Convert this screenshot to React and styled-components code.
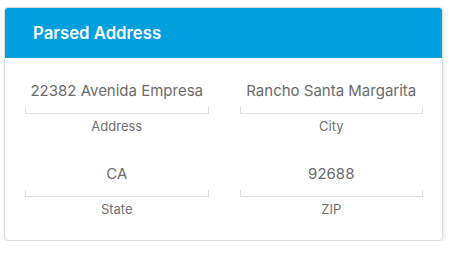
import React from "react";
import styled, { createGlobalStyle } from "styled-components";

const Global = createGlobalStyle`
  html, body { margin: 0; padding: 0; background: #fff; }
  body { font-family: Inter, "Noto Sans", sans-serif; }
`;

const Page = styled.div`
  padding: 7px 0 0 4px;
`;

const Card = styled.div`
  width: 439px;
  box-sizing: border-box;
  border: 1px solid #dcdcdc;
  border-radius: 4px;
  background: #fff;
  box-shadow: 1px 2px 5px rgba(0, 0, 0, 0.1);
  overflow: hidden;
`;

const Header = styled.div`
  height: 50px;
  background: #00a0de;
  color: #fff;
  display: flex;
  align-items: center;
  padding-left: 28px;
  font-size: 16.75px;
  font-weight: 600;
`;

const Body = styled.div`
  display: grid;
  grid-template-columns: 1fr 1fr;
  column-gap: 31px;
  row-gap: 30px;
  padding: 23px 19px 23px 20px;
`;

const Field = styled.div`
  display: flex;
  flex-direction: column;
  align-items: stretch;
  text-align: center;
`;

const Value = styled.div`
  font-size: 15px;
  line-height: 20px;
  color: #6b6b6b;
`;

const Bracket = styled.div`
  margin-top: 6px;
  height: 6px;
  border: 1px solid #dedede;
  border-top: none;
`;

const Label = styled.div`
  margin-top: 4px;
  font-size: 13px;
  line-height: 16px;
  color: #707070;
`;

const fields = [
  { value: "22382 Avenida Empresa", label: "Address" },
  { value: "Rancho Santa Margarita", label: "City" },
  { value: "CA", label: "State" },
  { value: "92688", label: "ZIP" },
];

export default function App() {
  return (
    <>
      <Global />
      <Page>
        <Card>
          <Header>Parsed Address</Header>
          <Body>
            {fields.map((f) => (
              <Field key={f.label}>
                <Value>{f.value}</Value>
                <Bracket />
                <Label>{f.label}</Label>
              </Field>
            ))}
          </Body>
        </Card>
      </Page>
    </>
  );
}
